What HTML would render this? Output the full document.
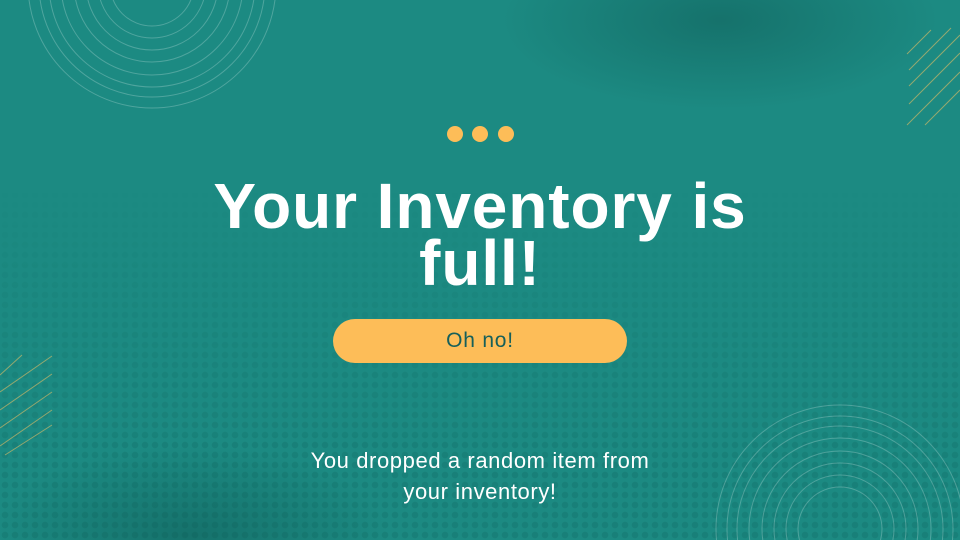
<!DOCTYPE html>
<html><head><style>
html,body{margin:0;padding:0;overflow:hidden;width:960px;height:540px}
body{position:relative;font-family:"Liberation Sans",sans-serif;
background:
radial-gradient(ellipse 220px 90px at 720px 20px,rgba(15,90,85,.5),rgba(15,90,85,0)),
radial-gradient(ellipse 200px 90px at 190px 535px,rgba(15,90,85,.5),rgba(15,90,85,0)),
#1c8a82;}
.dots{position:absolute;left:0;top:0;width:960px;height:540px;background-image:radial-gradient(circle,rgba(10,80,75,.16) 3px,transparent 3.5px);background-size:10px 10px;
-webkit-mask-image:linear-gradient(180deg,transparent 35%,#000 85%);mask-image:linear-gradient(180deg,transparent 35%,#000 85%)}
h1{position:absolute;left:0;width:960px;top:178px;margin:0;text-align:center;color:#fff;font-weight:bold;font-size:64px;line-height:57px;letter-spacing:0.9px}
.btn{position:absolute;left:333px;top:319px;width:294px;height:44px;border-radius:22px;background:#fdbd58;color:#16605a;font-size:21px;letter-spacing:0.8px;text-align:center;line-height:44px}
.d{position:absolute;top:126px;width:16px;height:16px;border-radius:50%;background:#fdbd58}
p{position:absolute;left:0;width:960px;top:445px;margin:0;text-align:center;color:#fff;font-size:22px;letter-spacing:0.6px;line-height:31px}
</style></head><body>
<div class="dots"></div>
<svg width="960" height="540" style="position:absolute;left:0;top:0">
<g fill="none" stroke="rgba(200,230,225,.3)" stroke-width="1">
<circle cx="152" cy="-16" r="42"/><circle cx="152" cy="-16" r="54"/><circle cx="152" cy="-16" r="66"/><circle cx="152" cy="-16" r="78"/><circle cx="152" cy="-16" r="91"/><circle cx="152" cy="-16" r="103"/><circle cx="152" cy="-16" r="113"/><circle cx="152" cy="-16" r="124"/>
<circle cx="840" cy="529" r="42"/><circle cx="840" cy="529" r="54"/><circle cx="840" cy="529" r="66"/><circle cx="840" cy="529" r="78"/><circle cx="840" cy="529" r="91"/><circle cx="840" cy="529" r="103"/><circle cx="840" cy="529" r="113"/><circle cx="840" cy="529" r="124"/>
</g>
<g stroke="rgba(230,190,100,.6)" stroke-width="1">
<line x1="907" y1="54" x2="931" y2="30"/><line x1="909" y1="70" x2="951" y2="28"/><line x1="909" y1="86" x2="960" y2="35"/><line x1="909" y1="104" x2="960" y2="53"/><line x1="907" y1="125" x2="960" y2="72"/><line x1="925" y1="125" x2="960" y2="90"/>
<line x1="0" y1="375" x2="22" y2="355"/><line x1="0" y1="392" x2="52" y2="356"/><line x1="0" y1="410" x2="52" y2="374"/><line x1="0" y1="428" x2="52" y2="392"/><line x1="0" y1="446" x2="52" y2="410"/><line x1="5" y1="455" x2="52" y2="425"/>
</g></svg>
<div class="d" style="left:447px"></div><div class="d" style="left:472px"></div><div class="d" style="left:498px"></div>
<h1>Your Inventory is<br>full!</h1>
<div class="btn">Oh no!</div>
<p>You dropped a random item from<br>your inventory!</p>
</body></html>
